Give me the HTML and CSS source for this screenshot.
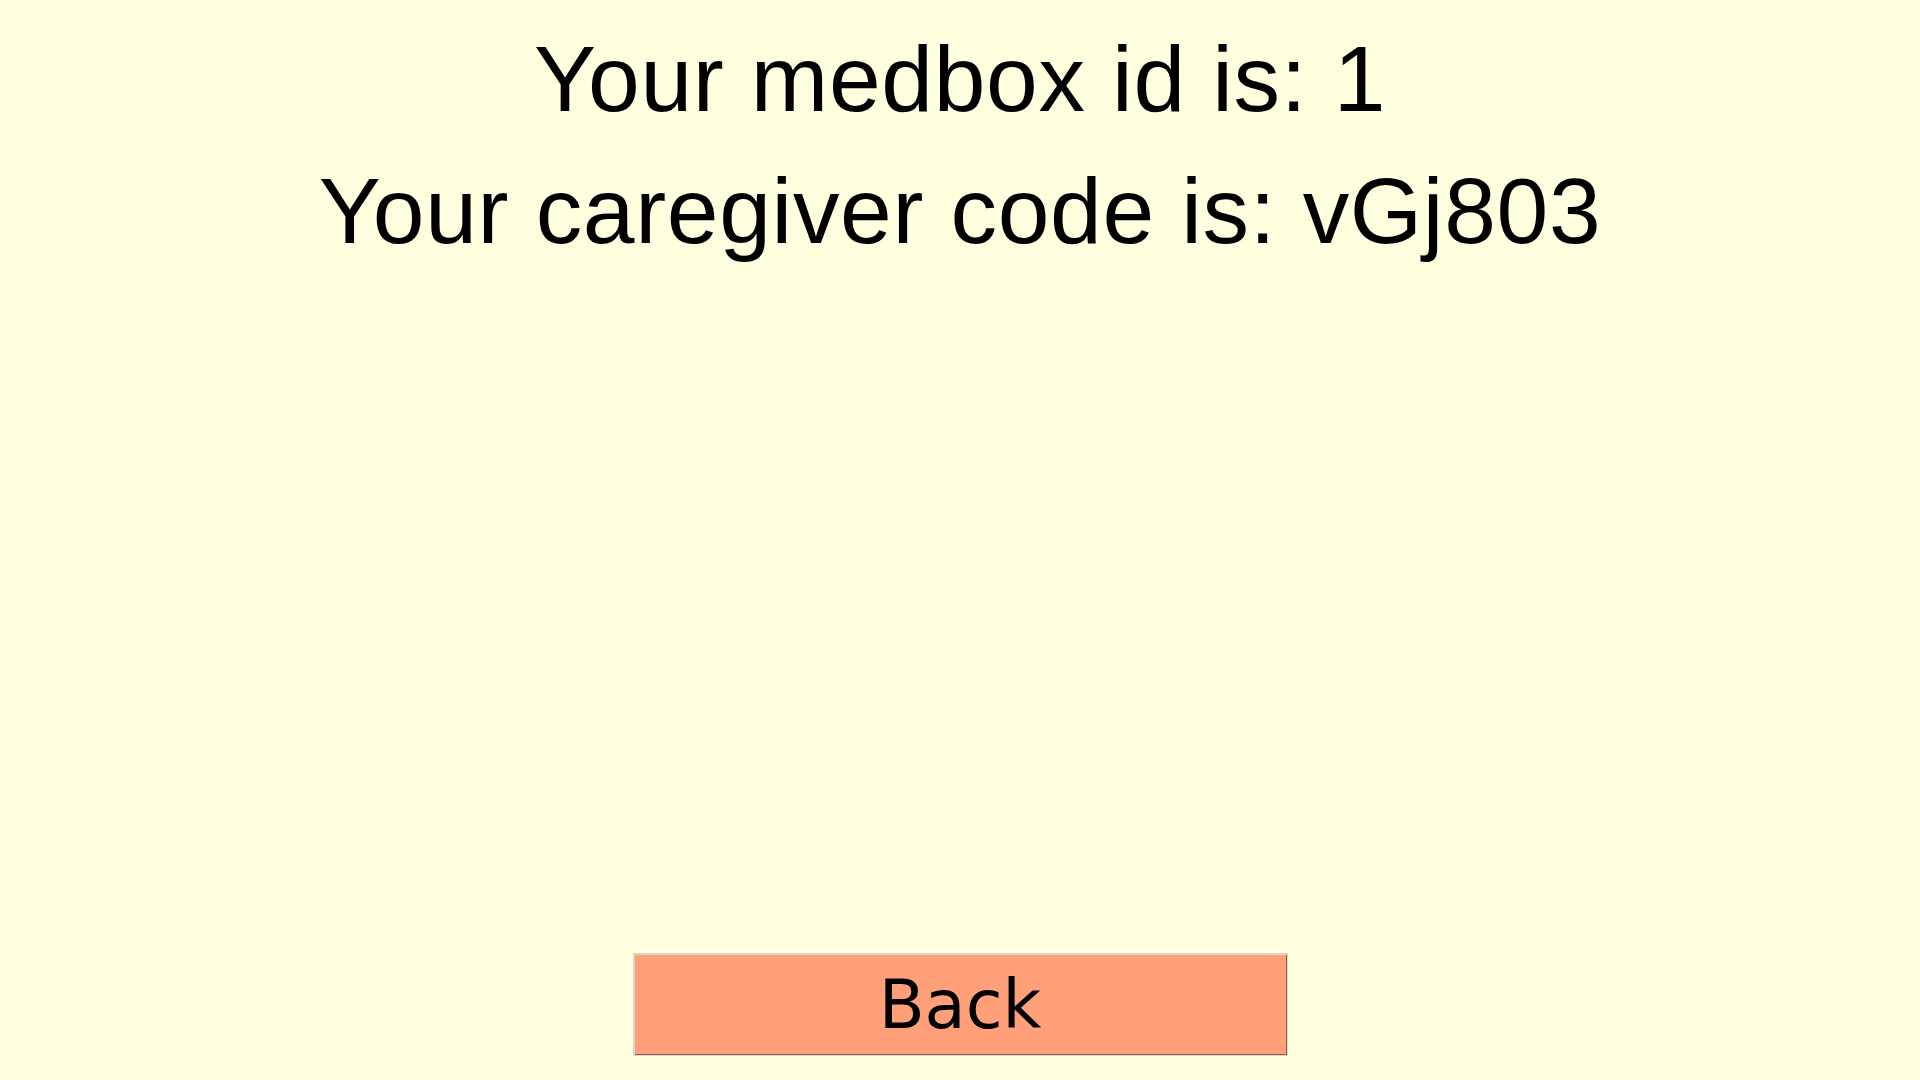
FILE: index.html
```html
<!DOCTYPE html>
<html lang="en">
<head>
<meta charset="utf-8">
<title>Medbox</title>
<link rel="stylesheet" href="styles.css">
</head>
<body>
<main class="screen">
  <div class="info">
    <p class="line">Your medbox id is: 1</p>
    <p class="line">Your caregiver code is: vGj803</p>
  </div>
  <button class="back" type="button">Back</button>
</main>
</body>
</html>
```
FILE: styles.css
```css
html, body {
  margin: 0;
  padding: 0;
  width: 1920px;
  height: 1080px;
  background: #ffffe0;
  overflow: hidden;
}

.screen {
  box-sizing: border-box;
  height: 1080px;
  display: flex;
  flex-direction: column;
  align-items: center;
  padding: 13px 0 24px;
}

.info {
  display: flex;
  flex-direction: column;
  align-items: center;
}

.line {
  margin: 0;
  font-family: "Liberation Sans", Arial, sans-serif;
  font-size: 93px;
  line-height: 132px;
  letter-spacing: 0.65px;
  color: #000;
  white-space: nowrap;
}

.back {
  margin-top: auto;
  box-sizing: border-box;
  width: 655px;
  height: 103px;
  padding: 1px 0 0;
  display: flex;
  align-items: center;
  justify-content: center;
  background: #ffa07a;
  border: 1px solid #d9d9d0;
  box-shadow: inset 1px 1px 0 #dcd6cc, inset -1px -1px 0 #8f5a48;
  font-family: "DejaVu Sans", sans-serif;
  font-size: 67px;
  color: #000;
  cursor: pointer;
}
```
